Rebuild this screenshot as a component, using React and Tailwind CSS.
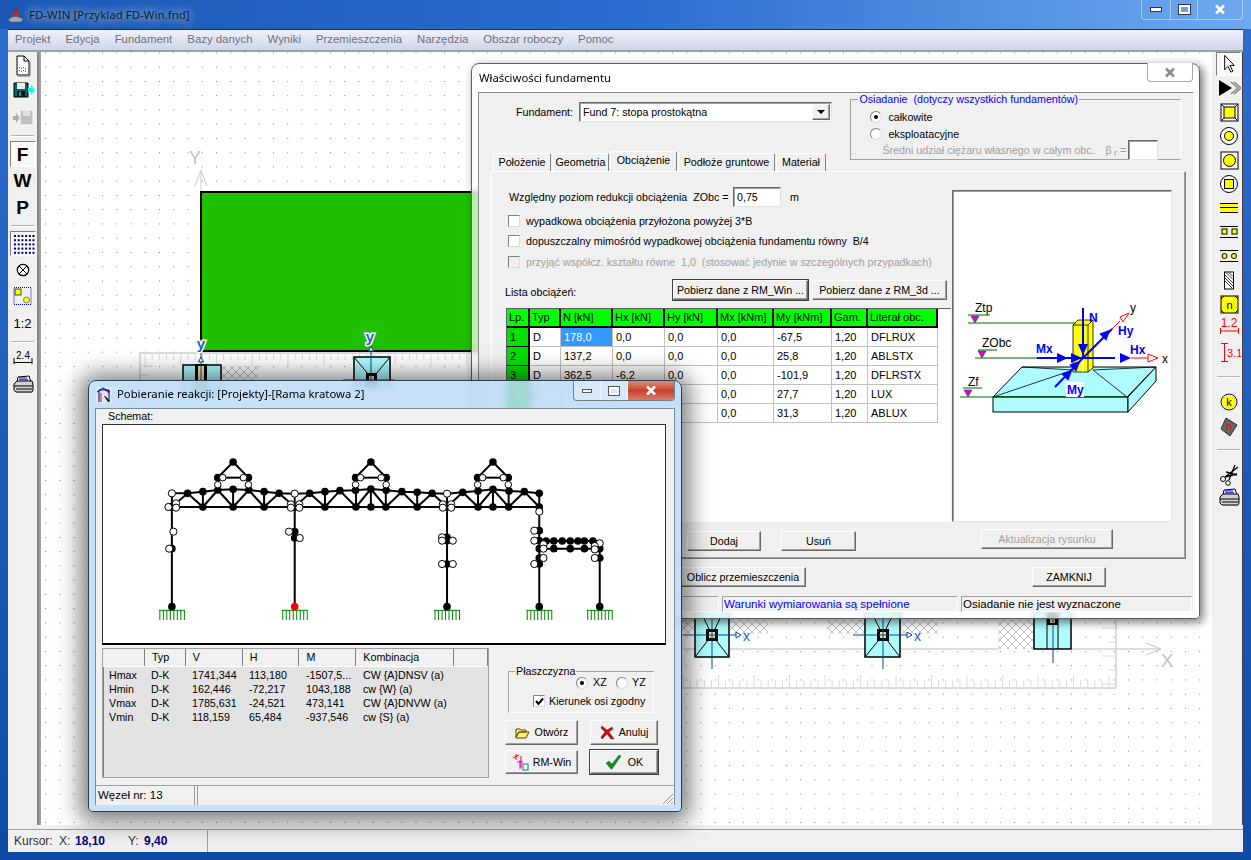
import React from 'react';

const raised = 'bg-[#f0f0f0] border border-t-white border-l-white border-r-[#696969] border-b-[#696969] shadow-[inset_-1px_-1px_0_#a0a0a0]';
const sunken = 'bg-white border border-t-[#696969] border-l-[#696969] border-r-[#e3e3e3] border-b-[#e3e3e3] shadow-[inset_1px_1px_0_#a0a0a0]';
const thinPanel = 'border border-t-[#a0a0a0] border-l-[#a0a0a0] border-r-white border-b-white';
const range = (n) => Array.from({ length: n }, (_, i) => i);

const Btn = ({ className = '', children, disabled, dark }) => (
  <button
    type="button"
    className={`${raised} ${dark ? 'outline outline-1 outline-[#404040]' : ''} ${disabled ? 'text-[#a0a0a0]' : 'text-black'} flex items-center justify-center whitespace-nowrap ${className}`}
  >
    {children}
  </button>
);

const Radio = ({ on }) => (
  <span className="w-[12px] h-[12px] rounded-full bg-white border border-t-[#808080] border-l-[#808080] border-r-[#dcdcdc] border-b-[#dcdcdc] flex items-center justify-center shrink-0">
    {on && <span className="w-[4px] h-[4px] rounded-full bg-black" />}
  </span>
);

const Check = ({ on, disabled }) => (
  <span className={`w-[12px] h-[12px] shrink-0 border border-t-[#808080] border-l-[#808080] border-r-[#dcdcdc] border-b-[#dcdcdc] flex items-center justify-center ${disabled ? 'bg-[#f0f0f0]' : 'bg-white'}`}>
    {on && (
      <svg width="9" height="9" viewBox="0 0 9 9">
        <path d="M1 4l2.5 3L8 1.5" fill="none" stroke="#000" strokeWidth="2" />
      </svg>
    )}
  </span>
);

/* ---------- toolbar icons ---------- */
const Ico = ({ children, w = 24, h = 24 }) => (
  <svg width={w} height={h} viewBox={`0 0 ${w} ${h}`}>{children}</svg>
);

const DocIcon = () => (
  <Ico>
    <path d="M6 3h7l5 5v14H6z" fill="#fff" stroke="#000" />
    <path d="M13 3v5h5" fill="none" stroke="#000" />
    <path d="M19 9v14H7" fill="none" stroke="#777" />
    <path d="M8 15q1-1 2 0t2 0 2 0 2 0M8 18q1-1 2 0t2 0 2 0 2 0" fill="none" stroke="#00f" strokeDasharray="1 1" />
  </Ico>
);
const SaveIcon = () => (
  <Ico>
    <path d="M3 4h14v14H3z" fill="#006a6a" stroke="#000" />
    <rect x="6" y="4" width="8" height="6" fill="#eee" />
    <rect x="6" y="12" width="8" height="6" fill="#111" />
    <rect x="8" y="13" width="2" height="4" fill="#0aa" />
    <path d="M17 9h3V6l4 5-4 5v-3h-3z" fill="#00ffff" />
  </Ico>
);
const DiskGrayIcon = () => (
  <Ico>
    <path d="M2 10h3V7l4 5-4 5v-3H2z" fill="#b0b0b0" />
    <rect x="9" y="4" width="13" height="15" fill="#c0c0c0" stroke="#fff" />
    <rect x="12" y="5" width="7" height="5" fill="#e0e0e0" />
  </Ico>
);
const GridIcon = () => (
  <Ico>
    {range(5).map((r) => range(6).map((c) => (
      <rect key={`${r}-${c}`} x={3 + c * 3.7} y={3 + r * 4.2} width="2" height="2" fill="#000080" />
    )))}
  </Ico>
);
const CrossCircle = () => (
  <Ico>
    <circle cx="12" cy="12" r="5.7" fill="#fff" stroke="#000" strokeWidth="1.2" />
    <path d="M8 8l8 8M16 8l-8 8" stroke="#000" />
  </Ico>
);
const SelectIcon = () => (
  <Ico>
    <rect x="3" y="2.500" width="17" height="17" fill="none" stroke="#00f" strokeDasharray="1 1" />
    <rect x="4" y="4" width="6" height="6" fill="#ff0" stroke="#000" strokeWidth=".7" />
    <circle cx="15.500" cy="15" r="3" fill="#ff0" stroke="#555" strokeWidth=".7" />
  </Ico>
);
const DimIcon = () => (
  <Ico>
    <text x="12" y="12" textAnchor="middle" fontSize="10" fontFamily="Liberation Sans" fill="#000">2.4</text>
    <path d="M3 11v6M21 11v6M3 15.500h18" stroke="#000" fill="none" />
  </Ico>
);
const PrinterIcon = () => (
  <Ico>
    <path d="M7 4l11-1 2 6H6z" fill="#fff" stroke="#000" />
    <path d="M8 5h8M8 6.800h9" stroke="#00f" />
    <path d="M3 11l3-3h15l1 3v6l-1 2H5l-2-2z" fill="#d0d0d0" stroke="#000" />
    <path d="M3 13h19M5 16h16" stroke="#000" />
    <path d="M6 19h15" stroke="#666" strokeWidth="2" />
  </Ico>
);
const CursorIcon = () => (
  <Ico>
    <path d="M8 3v15l3.500-3.500 3 6 2-1-3-6H18z" fill="#fff" stroke="#000" />
  </Ico>
);
const RunIcon = () => (
  <Ico>
    <path d="M2 4l13 8-13 8z" fill="#000" />
    <path d="M14 6l7 6-7 6M17 6l7 6-7 6" fill="none" stroke="#888" strokeWidth="1.500" />
  </Ico>
);
const Sq = ({ children }) => (
  <Ico>
    <rect x="4" y="4" width="17" height="17" fill="#fff" stroke="#000" />
    {children}
  </Ico>
);
const OuterSquare = () => (
  <Sq>
    <path d="M4 4l17 17M21 4L4 21" stroke="#000" />
    <rect x="7" y="7" width="11" height="11" fill="#ff0" stroke="#000" />
  </Sq>
);
const SquareRound = () => (
  <Sq>
    <circle cx="12.500" cy="12.500" r="6" fill="#ff0" stroke="#000" />
  </Sq>
);
const CircleRing = () => (
  <Ico>
    <circle cx="12" cy="12" r="8.500" fill="#fff" stroke="#000" />
    <circle cx="12" cy="12" r="4.500" fill="#ff0" stroke="#000" />
  </Ico>
);
const CircleSquare = () => (
  <Ico>
    <circle cx="12" cy="12" r="8.500" fill="#fff" stroke="#000" />
    <rect x="7.500" y="7.500" width="9" height="9" fill="#ff0" stroke="#000" />
  </Ico>
);
const BarsIcon = () => (
  <Ico>
    <path d="M3 7.500h18M3 11.500h18M3 16.500h18" stroke="#000" />
    <rect x="3" y="12" width="18" height="4" fill="#ff0" />
    <rect x="3" y="8" width="18" height="3" fill="#ff0" />
  </Ico>
);
const TwoSquares = () => (
  <Ico>
    <path d="M3 6.500h18M3 17.500h18" stroke="#000" />
    <rect x="5" y="9" width="5" height="5" fill="#ff0" stroke="#000" />
    <rect x="15" y="9" width="5" height="5" fill="#ff0" stroke="#000" />
  </Ico>
);
const TwoCircles = () => (
  <Ico>
    <path d="M3 6.500h18M3 17.500h18" stroke="#000" />
    <circle cx="7.500" cy="12" r="2.500" fill="#ff0" stroke="#000" />
    <circle cx="17" cy="12" r="2.500" fill="#ff0" stroke="#000" />
  </Ico>
);
const HatchIcon = () => (
  <Ico>
    <rect x="7.500" y="4" width="9" height="17" fill="#fff" stroke="#000" />
    <path d="M8 7l8 8M8 10l8 8M8 13l7 7M9 4.500l7 7M12 4.500l4 4" stroke="#000" strokeWidth=".8" />
  </Ico>
);
const NIcon = () => (
  <Ico>
    <rect x="4" y="4" width="17" height="17" fill="#ff0" stroke="#000" />
    <path d="M4 7l3-3M18 4l3 3M4 18l3 3M21 18l-3 3" stroke="#000" />
    <text x="12.500" y="16.500" textAnchor="middle" fontSize="11" fontFamily="Liberation Sans" fill="#000">n</text>
  </Ico>
);
const RedH = () => (
  <Ico>
    <text x="12" y="11" textAnchor="middle" fontSize="12" fontFamily="Liberation Sans" fill="#f00">1.2</text>
    <path d="M3.500 12v6M21.500 12v6M3.500 15h18" stroke="#f00" fill="none" />
  </Ico>
);
const RedV = () => (
  <Ico>
    <path d="M4 3.500h7M4 21.500h7M7.500 3.500v18" stroke="#f00" fill="none" />
    <text x="10" y="17" fontSize="11" fontFamily="Liberation Sans" fill="#f00">3.1</text>
  </Ico>
);
const KIcon = () => (
  <Ico>
    <circle cx="12" cy="12" r="8" fill="#ff0" stroke="#00f" />
    <text x="12" y="16" textAnchor="middle" fontSize="11" fontFamily="Liberation Sans" fill="#000">k</text>
  </Ico>
);
const DiamondIcon = () => (
  <Ico>
    <path d="M9 4l11 7-7 11-9-7z" fill="#666" stroke="#333" />
    <text x="12" y="16" textAnchor="middle" fontSize="11" fontFamily="Liberation Sans" fill="#e00">n</text>
  </Ico>
);
const ScissorsIcon = () => (
  <Ico>
    <path d="M8 15L21 5M9 10l11 3M8 15l12-3" stroke="#000" strokeWidth="1.300" fill="none" />
    <circle cx="6" cy="17" r="2.500" fill="#fff" stroke="#000" />
    <circle cx="11" cy="21" r="2.300" fill="#fff" stroke="#000" />
    <path d="M12 18L18 3" stroke="#000" strokeWidth="1.300" />
  </Ico>
);

const Sep = ({ h }) => (
  <div className={`w-full flex items-center justify-center ${h}`}>
    <div className="w-[23px] h-[2px] bg-[#b4b4b4] border-b border-white" />
  </div>
);

const LeftToolbar = () => {
  const cell = 'w-full flex items-center justify-center';
  const pressed = 'w-[26px] mx-auto flex items-center justify-center border border-t-[#808080] border-l-[#808080] border-r-white border-b-white bg-[#f8f8f8]';
  const letter = 'text-[19px] font-bold text-black leading-none';
  return (
    <div className="w-[29px] shrink-0 flex flex-col">
      <div className={`${cell} h-[25px]`}><DocIcon /></div>
      <div className={`${cell} h-[27px]`}><SaveIcon /></div>
      <div className={`${cell} h-[27px]`}><DiskGrayIcon /></div>
      <Sep h="h-[10px]" />
      <div className={`${pressed} h-[26px]`}><span className={letter}>F</span></div>
      <div className={`${cell} h-[27px]`}><span className={letter}>W</span></div>
      <div className={`${cell} h-[27px]`}><span className={letter}>P</span></div>
      <Sep h="h-[10px]" />
      <div className={`${pressed} h-[25px]`}><GridIcon /></div>
      <div className={`${cell} h-[27px]`}><CrossCircle /></div>
      <div className={`${cell} h-[27px]`}><SelectIcon /></div>
      <div className={`${cell} h-[27px] text-[13px] text-black`}>1:2</div>
      <Sep h="h-[10px]" />
      <div className={`${cell} h-[24px]`}><DimIcon /></div>
      <div className={`${cell} h-[27px]`}><PrinterIcon /></div>
    </div>
  );
};

const RightToolbar = () => {
  const cell = 'w-full h-6 flex items-center justify-center';
  return (
    <div className="w-[27px] shrink-0 flex flex-col">
      <div className="h-6 w-[25px] mx-auto flex items-center justify-center border border-t-[#808080] border-l-[#808080] border-r-white border-b-white bg-[#f8f8f8]"><CursorIcon /></div>
      <div className={cell}><RunIcon /></div>
      <div className={cell}><OuterSquare /></div>
      <div className={cell}><CircleRing /></div>
      <div className={cell}><SquareRound /></div>
      <div className={cell}><CircleSquare /></div>
      <div className={cell}><BarsIcon /></div>
      <div className={cell}><TwoSquares /></div>
      <div className={cell}><TwoCircles /></div>
      <div className={cell}><HatchIcon /></div>
      <div className={cell}><NIcon /></div>
      <div className={cell}><RedH /></div>
      <div className={cell}><RedV /></div>
      <Sep h="h-[26px]" />
      <div className={cell}><KIcon /></div>
      <div className={cell}><DiamondIcon /></div>
      <Sep h="h-[24px]" />
      <div className={cell}><ScissorsIcon /></div>
      <div className={cell}><PrinterIcon /></div>
    </div>
  );
};

/* ---------- plan drawing on the canvas ---------- */
const BLUE_AXIS = '#004a8f';
const Foundation = ({ x, w, top, bottom, cx, cy, axisTop, axisBottom, diag, postW = 12 }) => (
  <g>
    <rect x={x} y={top} width={w} height={bottom - top} fill="#aefcff" stroke="#000" strokeWidth="1.500" />
    {diag && <path d={`M${x} ${top}L${cx} ${cy}M${x + w} ${top}L${cx} ${cy}M${x} ${bottom}L${cx} ${cy}M${x + w} ${bottom}L${cx} ${cy}`} stroke="#000" />}
    <rect x={cx - postW / 2} y={cy - postW / 2} width={postW} height={postW} fill="#000" />
    <rect x={cx - 3} y={cy - 3} width="6" height="6" fill="#f5d9a0" />
    <path d={`M${cx} ${axisTop}V${axisBottom}`} stroke={BLUE_AXIS} />
  </g>
);
const AxisX = ({ x1, x2, y }) => (
  <g>
    <path d={`M${x1} ${y}H${x2}`} stroke={BLUE_AXIS} />
    <path d={`M${x2} ${y - 3}l5 3-5 3z`} fill="#fff" stroke={BLUE_AXIS} />
    <text x={x2 + 7} y={y + 6} fontSize="14" fill="#1e5fd0" fontFamily="Liberation Sans">x</text>
  </g>
);
const Label = ({ x, y, children }) => (
  <text x={x} y={y} fontSize="15" fontWeight="bold" fill="#1e5fd0" stroke="#fff" strokeWidth="3" paintOrder="stroke" textAnchor="middle" fontFamily="Liberation Sans">{children}</text>
);

const CanvasDrawing = () => (
  <svg className="absolute inset-0" width="1171" height="773" viewBox="41 52 1171 773">
    <defs>
      <pattern id="dots" patternUnits="userSpaceOnUse" x="45" y="66.700" width="14.250" height="14.250">
        <rect width="1" height="1" fill="#808080" />
      </pattern>
      <pattern id="hatch" patternUnits="userSpaceOnUse" width="8" height="8">
        <path d="M0 0l8 8M8 0L0 8" stroke="#c4c4c4" />
      </pattern>
    </defs>
    <rect x="41" y="52" width="1171" height="773" fill="#fff" />
    <rect x="41" y="52" width="1171" height="773" fill="url(#dots)" />
    <g stroke="#c8c8c8" fill="none">
      <path d="M201 192V171M195 186l6-16 6 16" />
    </g>
    <text x="195" y="164" textAnchor="middle" fontSize="18" fill="#c0c0c0" fontFamily="Liberation Sans">Y</text>
    <rect x="201" y="192" width="290" height="159" fill="#1fc000" stroke="#000" strokeWidth="2" />
    <rect x="202" y="193" width="288" height="157" fill="url(#dots)" opacity=".35" />

    {/* rulers */}
    <g stroke="#dcdcdc">
      <path d="M139 353H480M140 353V400" strokeWidth="2" fill="none" />
      {range(48).map((i) => <path key={i} d={`M${145 + i * 7.150} 354v${i % 5 === 0 ? 11 : 6}`} />)}
      <path d="M141 366h12M141 375h8" />
      <path d="M683 688H1116M1116 620V688" strokeWidth="2" fill="none" />
      {range(62).map((i) => <path key={i} d={`M${683 + i * 7.100} 688v${i % 5 === 0 ? -13 : -8}`} />)}
      {range(5).map((i) => <path key={i} d={`M1116 ${628 + i * 14}h${i % 2 ? -8 : -14}`} />)}
    </g>
    <path d="M683 649H998M1071 649H1160" stroke="#bbb" fill="none" />
    <path d="M1146 643l15 6-15 6" stroke="#c8c8c8" fill="none" />
    <text x="1167" y="667" textAnchor="middle" fontSize="19" fill="#c4c4c4" fontFamily="Liberation Sans">X</text>

    {/* upper row of footings */}
    <rect x="221" y="366" width="37" height="20" fill="url(#hatch)" />
    <rect x="183" y="365" width="38" height="30" fill="#aefcff" stroke="#000" strokeWidth="1.500" />
    <rect x="195" y="364" width="12" height="30" fill="#000" />
    <rect x="198" y="366" width="6" height="28" fill="#f5e3b0" />
    <path d="M201 352v42" stroke={BLUE_AXIS} />
    <path d="M198.500 362l2.500-5 2.500 5z" fill="#fff" stroke={BLUE_AXIS} />
    <Label x="201" y="349">y</Label>
    <rect x="354" y="357" width="36" height="30" fill="#aefcff" stroke="#000" strokeWidth="1.500" />
    <path d="M354 357l14 17M390 357l-14 17" stroke="#000" />
    <rect x="366" y="373" width="11" height="12" fill="#000" />
    <rect x="369" y="376" width="5" height="5" fill="#f5d9a0" />
    <path d="M371 347v35M343 380h52" stroke={BLUE_AXIS} />
    <path d="M368.500 351l2.500-5 2.500 5z" fill="#fff" stroke={BLUE_AXIS} />
    <Label x="370" y="342">y</Label>

    {/* lower row of footings */}
    <rect x="670" y="620" width="25" height="14" fill="url(#hatch)" />
    <rect x="729" y="620" width="39" height="14" fill="url(#hatch)" />
    <Foundation x={695} w={34} top={600} bottom={657} cx={712} cy={635} axisTop={600} axisBottom={669} diag />
    <AxisX x1={683} x2={736} y={635} />
    <rect x="827" y="620" width="38" height="14" fill="url(#hatch)" />
    <rect x="900" y="620" width="38" height="14" fill="url(#hatch)" />
    <Foundation x={865} w={35} top={600} bottom={657} cx={883} cy={635} axisTop={600} axisBottom={669} diag />
    <AxisX x1={853} x2={907} y={635} />
    <rect x="998" y="620" width="36" height="29" fill="url(#hatch)" />
    <rect x="1034" y="600" width="37" height="49" fill="#aefcff" stroke="#000" strokeWidth="1.500" />
    <path d="M1047 600v49M1058 600v49" stroke="#000" />
    <rect x="1047" y="612" width="11" height="13" fill="#000" />
    <rect x="1050" y="617" width="5" height="6" fill="#f5d9a0" />
    <path d="M1053 612v51" stroke={BLUE_AXIS} />
  </svg>
);

/* ---------- truss scheme ---------- */
const tx = (X) => 85 + X / 2.613;
const ty = (Y) => 375 + Y / 3;
const polyPts = (pts) => pts.map(([x, y]) => `${tx(x)},${ty(y)}`).join(' ');
const topChord = [[227, 352], [268, 352], [308, 347], [347, 342], [387, 340], [428, 342], [468, 347], [507, 352], [548, 353], [587, 352], [627, 347], [666, 344], [707, 343], [747, 339], [787, 343], [828, 347], [868, 349], [907, 352], [946, 353], [987, 349], [1027, 345], [1066, 340], [1108, 345], [1148, 347], [1187, 352]];
const bottomX = [227, 308, 387, 468, 548, 627, 708, 747, 786, 868, 946, 1027, 1066, 1107, 1187];
const web = [[227, 268], [308, 268], [308, 347], [387, 347], [387, 428], [468, 428], [468, 507], [548, 507], [548, 587], [627, 587], [627, 666], [708, 666], [708, 747], [786, 747], [786, 828], [868, 828], [868, 907], [946, 907], [946, 987], [1027, 987], [1027, 1066], [1107, 1066], [1107, 1148], [1187, 1148]];
const yAt = (X) => topChord.find(([x]) => Math.abs(x - X) < 3)?.[1] ?? 345;
const hutCx = [387, 747, 1066];
const blackNodes = [[222, 393], [227, 518], [548, 467], [548, 486], [946, 484], [946, 494], [946, 564], [1187, 464], [1187, 494], [1187, 518], [1187, 546], [1187, 564], [1345, 518], [1345, 546], [1205, 495], [1225, 495], [1247, 495], [1268, 495], [1288, 495], [1305, 495], [1327, 495], [1225, 518], [1268, 518], [1305, 518], [227, 692], [946, 692], [1187, 692], [1345, 692]];
const whiteNodes = [[227, 352], [238, 382], [238, 395], [218, 393], [231, 467], [220, 518], [548, 353], [538, 385], [560, 385], [538, 395], [560, 395], [533, 467], [561, 486], [946, 353], [935, 385], [957, 385], [935, 395], [957, 395], [933, 484], [933, 494], [961, 494], [933, 564], [961, 564], [1187, 407], [1174, 464], [1174, 494], [1198, 505], [1198, 518], [1198, 546], [1174, 564], [1345, 502], [1332, 510], [1332, 520], [1332, 546]];
const supports = [227, 548, 946, 1187, 1345];

const TrussScheme = () => (
  <svg width="561" height="218" viewBox="103 424 561 218">
    <g stroke="#000" strokeWidth="2" fill="none">
      <polyline points={polyPts(topChord)} />
      <polyline points={polyPts([[227, 393], [1187, 393]])} />
      {web.map(([b, t], i) => <polyline key={i} points={polyPts([[b, 393], [t, yAt(t)]])} />)}
      {[308, 387, 468, 627, 708, 747, 786, 868, 1027, 1066, 1107].map((X) => <polyline key={X} points={polyPts([[X, 393], [X, yAt(X)]])} />)}
      {hutCx.map((c) => (
        <g key={c}>
          <polyline points={polyPts([[c - 40, 342], [c - 40, 305], [c, 258], [c + 40, 305], [c + 40, 342]])} />
          <polyline points={polyPts([[c - 40, 305], [c + 40, 305]])} />
        </g>
      ))}
      {[[227, 352], [548, 353], [946, 353], [1187, 352], [1345, 505]].map(([X, Y]) => <polyline key={X} points={polyPts([[X, Y], [X, 692]])} />)}
      <polyline points={polyPts([[1187, 495], [1345, 495]])} />
      <polyline points={polyPts([[1187, 518], [1345, 518]])} />
    </g>
    {supports.map((X) => (
      <g key={X} stroke="#008000">
        <path d={`M${tx(X) - 13} ${ty(703)}H${tx(X) + 13}`} />
        {range(8).map((i) => <path key={i} d={`M${tx(X) - 12 + i * 3.500} ${ty(703)}V${ty(732)}`} />)}
      </g>
    ))}
    {bottomX.map((X) => <circle key={X} cx={tx(X)} cy={ty(393)} r="3.800" fill="#000" />)}
    {topChord.filter(([x]) => ![227, 548, 946].includes(x)).map(([X, Y]) => <circle key={X} cx={tx(X)} cy={ty(Y)} r="3.800" fill="#000" />)}
    {hutCx.map((c) => [[c, 258], [c - 40, 305], [c + 40, 305]].map(([X, Y]) => <circle key={`${X}-${Y}`} cx={tx(X)} cy={ty(Y)} r="3.800" fill="#000" />))}
    {blackNodes.map(([X, Y]) => <circle key={`${X}-${Y}`} cx={tx(X)} cy={ty(Y)} r="3.800" fill="#000" />)}
    <circle cx={tx(548)} cy={ty(692)} r="3.800" fill="#f00" />
    {hutCx.map((c) => [[c - 27, 305], [c + 27, 305], [c - 40, 326], [c + 40, 326]].map(([X, Y]) => <circle key={`${X}-${Y}`} cx={tx(X)} cy={ty(Y)} r="3.300" fill="#fff" stroke="#000" />))}
    {whiteNodes.map(([X, Y]) => <circle key={`${X}-${Y}`} cx={tx(X)} cy={ty(Y)} r="3.600" fill="#fff" stroke="#000" />)}
  </svg>
);

/* ---------- footing sketch with loads ---------- */
const Arrow = ({ x, y, a }) => (
  <path d="M-6 -5L5 0L-6 5z" fill="#00f" transform={`translate(${x} ${y}) rotate(${a})`} />
);
const Tri = ({ x, y }) => <path d={`M${x - 4} ${y - 3}h8l-4 7z`} fill="#e000e0" stroke="#006400" strokeWidth=".6" />;
const SketchText = ({ x, y, c = '#000', b, children }) => (
  <text x={x} y={y} fontSize="12" fontWeight={b ? 'bold' : 'normal'} fill={c} fontFamily="Liberation Sans">{children}</text>
);

const FootingSketch = () => (
  <svg width="218" height="330" viewBox="953 191 218 330">
    <path d="M1022 367h134l-29 30H993z" fill="#aefcff" stroke="#000" />
    <rect x="993" y="397" width="135" height="15" fill="#aefcff" stroke="#000" />
    <path d="M1128 397l28-30v14l-28 31z" fill="#aefcff" stroke="#000" />
    <path d="M993 397l80-27M1127 397l-34-27M1022 367l51 3M1156 367l-63 3" stroke="#000" fill="none" strokeWidth=".8" />
    <path d="M1073 325l5-5h15v48l-5 4h-15z" fill="#ffff00" stroke="#000" strokeWidth=".8" />
    <path d="M1073 325h15v47M1088 325l5-5" fill="none" stroke="#000" strokeWidth=".8" />
    <path d="M1083 372V325" stroke="#fff" />

    <g stroke="#006400" fill="none">
      <path d="M968 323h108M968 315h22M975 358h62M978 350h19M960 397h168M963 388h19" />
    </g>
    <Tri x={975} y={319} />
    <Tri x={982} y={354} />
    <Tri x={968} y={393} />
    <SketchText x={975} y={312}>Ztp</SketchText>
    <SketchText x={982} y={347}>ZObc</SketchText>
    <SketchText x={968} y={386}>Zf</SketchText>

    <g stroke="#00f" strokeWidth="2" fill="none">
      <path d="M1083 308v50M1037 358h78M1055 387l28-29 29-29" />
    </g>
    <Arrow x={1083} y={350} a={90} />
    <Arrow x={1063} y={358} a={0} />
    <Arrow x={1077} y={358} a={0} />
    <Arrow x={1126} y={358} a={0} />
    <Arrow x={1069} y={373} a={-45} />
    <Arrow x={1077} y={364} a={-45} />
    <Arrow x={1107} y={333} a={-45} />
    <path d="M1131 358h20M1112 329l8-8" stroke="#f00" fill="none" />
    <path d="M1148 354l10 4-10 4z" fill="#fff" stroke="#f00" />
    <path d="M1129 313l-9 4 3 5z" fill="#fff" stroke="#f00" />
    <SketchText x={1162} y={363} c="#000">x</SketchText>
    <SketchText x={1130} y={312} c="#000">y</SketchText>
    <SketchText x={1089} y={322} c="#00f" b>N</SketchText>
    <SketchText x={1118} y={335} c="#00f" b>Hy</SketchText>
    <SketchText x={1130} y={354} c="#00f" b>Hx</SketchText>
    <SketchText x={1036} y={353} c="#00f" b>Mx</SketchText>
    <rect x="1066" y="382" width="18" height="15" fill="#fff" />
    <SketchText x={1067} y={394} c="#00f" b>My</SketchText>
  </svg>
);

/* ---------- load table ---------- */
const colW = ['w-[23px]', 'w-[31px]', 'w-[52px]', 'w-[52px]', 'w-[53px]', 'w-[56px]', 'w-[58px]', 'w-[36px]', 'w-[70px]'];
const loadHeader = ['Lp.', 'Typ', 'N [kN]', 'Hx [kN]', 'Hy [kN]', 'Mx [kNm]', 'My [kNm]', 'Gam.', 'Literał obc.'];
const loadRows = [
  ['1', 'D', '178,0', '0,0', '0,0', '0,0', '-67,5', '1,20', 'DFLRUX'],
  ['2', 'D', '137,2', '0,0', '0,0', '0,0', '25,8', '1,20', 'ABLSTX'],
  ['3', 'D', '362,5', '-6,2', '0,0', '0,0', '-101,9', '1,20', 'DFLRSTX'],
  ['4', 'D', '', '', '', '0,0', '27,7', '1,20', 'LUX'],
  ['5', 'D', '', '', '', '0,0', '31,3', '1,20', 'ABLUX'],
];

const LoadTable = () => (
  <div className="w-[445px] h-[214px] ml-[14px] mt-[8px] bg-white border-l border-t border-[#606060] text-[11px]">
    <div className="flex h-[19px]">
      {loadHeader.map((t, i) => (
        <div key={t} className={`${colW[i]} h-full bg-[#00ff00] border-r-2 border-b-2 border-black px-[2px] flex items-center whitespace-nowrap`}>{t}</div>
      ))}
    </div>
    {loadRows.map((row) => (
      <div key={row[0]} className="flex h-[19px]">
        {row.map((t, i) => (
          <div
            key={i}
            className={`${colW[i]} h-full px-[3px] flex items-center border-b ${i === 0 ? 'bg-[#00e000] border-r-2 border-b-black border-r-black' : 'border-r border-[#c0c0c0]'} ${row[0] === '1' && i === 2 ? 'bg-[#3399ff] text-white' : ''}`}
          >
            {t}
          </div>
        ))}
      </div>
    ))}
  </div>
);

/* ---------- properties dialog ---------- */
const tabs = [
  ['Położenie', 'w-[58px]'],
  ['Geometria', 'w-[57px]'],
  ['Obciążenie', 'w-[67px]'],
  ['Podłoże gruntowe', 'w-[97px]'],
  ['Materiał', 'w-[50px]'],
];

const PropertiesDialog = () => (
  <div className="absolute left-[471px] top-[63px] w-[729px] h-[556px] rounded-t-[8px] rounded-b-[4px] bg-white/70 backdrop-blur-[3px] border border-[#606060] shadow-[3px_3px_10px_rgba(0,0,0,.55)] px-[6px] text-[10.7px] text-black">
    <div className="h-[28px] flex items-center relative">
      <span className="ml-[1px] text-[11.3px] font-['Noto_Sans',sans-serif]">Właściwości fundamentu</span>
      <div className="absolute right-0 -top-px w-[46px] h-[19px] bg-white border border-t-0 border-[#a8a8a8] rounded-b-[4px] flex items-center justify-center">
        <svg width="12" height="11" viewBox="0 0 12 11">
          <path d="M2 1.500l8 8M10 1.500l-8 8" stroke="#8a8a8a" strokeWidth="2.500" />
        </svg>
      </div>
    </div>

    <div className="w-[715px] h-[520px] bg-[#f0f0f0] border-l border-t border-[#8a8a8a] flex flex-col">
      <div className="h-[78px] flex px-[12px]">
        <div className="w-[361px] flex flex-col">
          <div className="flex items-center mt-[9px] h-[20px]">
            <span className="ml-[25px] w-[63px]">Fundament:</span>
            <div className={`${sunken} w-[253px] h-[20px] flex items-center justify-between pl-[3px]`}>
              <span>Fund 7: stopa prostokątna</span>
              <span className={`${raised} w-[18px] h-[16px] flex items-center justify-center mr-[1px]`}>
                <span className="w-0 h-0 border-x-[4px] border-x-transparent border-t-[4px] border-t-black" />
              </span>
            </div>
          </div>
          <div className="flex items-end mt-[29px] ml-[2px] h-[20px]">
            {tabs.map(([t, w]) => (
              <div
                key={t}
                className={`${w} mr-[1px] border border-b-0 border-t-white border-l-white border-r-[#808080] rounded-t-[2px] flex items-center justify-center bg-[#f0f0f0] whitespace-nowrap ${t === 'Obciążenie' ? 'h-[20px] pb-[3px]' : 'h-[18px]'}`}
              >
                {t}
              </div>
            ))}
          </div>
        </div>
        <fieldset className="-mt-[2px] w-[332px] h-[69px] border border-t-[#a0a0a0] border-l-[#a0a0a0] border-r-white border-b-[#a0a0a0] pl-[19px]">
          <legend className="ml-[-12px] px-[1px] text-[#0000ff]">Osiadanie&nbsp; (dotyczy wszystkich fundamentów)</legend>
          <div className="flex items-center h-[17px] gap-[6px] mt-[1px]"><Radio on />całkowite</div>
          <div className="flex items-center h-[17px] gap-[6px]"><Radio />eksploatacyjne</div>
          <div className="flex items-center h-[15px] pl-[12px] text-[#a0a0a0] whitespace-nowrap">
            <span className="w-[223px]">Średni udział ciężaru własnego w całym obc.</span>
            <span className="w-[23px]">β<sub className="text-[9px]"> r</sub> =</span>
            <span className={`${sunken} w-[30px] h-[20px] bg-[#f0f0f0]`} />
          </div>
        </fieldset>
      </div>

      <div className="mx-[12px] w-[695px] h-[388px] border border-t-white border-l-white border-r-[#808080] border-b-[#808080] shadow-[inset_-1px_-1px_0_#a0a0a0] flex flex-col">
        <div className="h-[351px] flex">
          <div className="w-[460px] shrink-0">
            <div className="flex items-center mt-[15px] h-[20px] pl-[17px] whitespace-nowrap">
              <span className="w-[224px]">Względny poziom redukcji obciążenia&nbsp; ZObc =</span>
              <span className={`${sunken} w-[48px] h-[20px] pl-[3px] flex items-center`}>0,75</span>
              <span className="ml-[9px]">m</span>
            </div>
            <div className="flex items-center gap-[6px] mt-[4px] h-[20px] pl-[16px] whitespace-nowrap"><Check />wypadkowa obciążenia przyłożona powyżej 3*B</div>
            <div className="flex items-center gap-[6px] h-[20px] pl-[16px] whitespace-nowrap"><Check />dopuszczalny mimośród wypadkowej obciążenia fundamentu równy&nbsp; B/4</div>
            <div className="flex items-center gap-[6px] mt-[1px] h-[20px] pl-[16px] text-[#a0a0a0] whitespace-nowrap"><Check disabled />przyjąć współcz. kształtu równe&nbsp; 1,0&nbsp; (stosować jedynie w szczególnych przypadkach)</div>
            <div className="flex items-center mt-[8px] h-[20px]">
              <span className="ml-[13px] w-[168px] pt-[5px]">Lista obciążeń:</span>
              <Btn dark className="w-[135px] h-[20px]">Pobierz dane z RM_Win ...</Btn>
              <Btn className="ml-[4px] w-[135px] h-[20px]">Pobierz dane z RM_3d ...</Btn>
            </div>
            <LoadTable />
          </div>
          <div className={`${sunken} mt-[18px] w-[220px] h-[332px] overflow-hidden`}>
            <FootingSketch />
          </div>
        </div>
        <div className="flex">
          <Btn className="ml-[195px] mt-[8px] w-[74px] h-[20px]">Dodaj</Btn>
          <Btn className="ml-[20px] mt-[8px] w-[75px] h-[20px]">Usuń</Btn>
          <Btn disabled className="ml-[125px] mt-[6px] w-[132px] h-[20px]">Aktualizacja rysunku</Btn>
        </div>
      </div>

      <div className="flex mt-[8px] pl-[201px]">
        <Btn className="w-[126px] h-[20px]">Oblicz przemieszczenia</Btn>
        <Btn className="ml-[226px] w-[74px] h-[20px]">ZAMKNIJ</Btn>
      </div>

      <div className="flex mt-[9px] h-[16px] gap-[3px] text-[11.5px] whitespace-nowrap">
        <div className={`${thinPanel} w-[240px]`} />
        <div className={`${thinPanel} w-[236px] text-[#0000ff] pl-[1px] leading-[15px]`}>Warunki wymiarowania są spełnione</div>
        <div className={`${thinPanel} w-[231px] pl-[1px] leading-[15px]`}>Osiadanie nie jest wyznaczone</div>
      </div>
    </div>
  </div>
);

/* ---------- reactions dialog ---------- */
const reactionCols = ['w-[42px]', 'w-[41px]', 'w-[57px]', 'w-[57px]', 'w-[57px]', 'w-[98px]', 'w-[34px]'];
const reactionHeader = ['', 'Typ', 'V', 'H', 'M', 'Kombinacja', ''];
const reactionRows = [
  ['Hmax', 'D-K', '1741,344', '113,180', '-1507,5...', 'CW {A}DNSV (a)'],
  ['Hmin', 'D-K', '162,446', '-72,217', '1043,188', 'cw {W} (a)'],
  ['Vmax', 'D-K', '1785,631', '-24,521', '473,141', 'CW {A}DNVW (a)'],
  ['Vmin', 'D-K', '118,159', '65,484', '-937,546', 'cw {S} (a)'],
];

const ReactionsDialog = () => (
  <div className="absolute left-[88px] top-[380px] w-[594px] h-[432px] rounded-t-[8px] rounded-b-[4px] bg-[#bcdcf6]/85 backdrop-blur-[3px] border border-[#2c3e50] shadow-[0_2px_22px_8px_rgba(0,0,0,.5)] px-[6px] text-[10.7px] text-black">
    <div className="h-[27px] flex items-center gap-[5px] relative">
      <svg width="16" height="16" viewBox="0 0 16 16" className="ml-[1px]">
        <rect x="0" y="0" width="16" height="16" fill="#fff" fillOpacity=".3" />
        <path d="M3 15V3h10v12M1 5l6-4 7 4" fill="none" stroke="#000080" />
        <path d="M5 6v9M9 3l4 3" stroke="#f00" fill="none" />
        <path d="M9 9l5 5-2 1-4-6z" fill="#000" />
      </svg>
      <span className="text-[11.3px] font-['Noto_Sans',sans-serif]">Pobieranie reakcji: [Projekty]-[Rama kratowa 2]</span>
      <div className="absolute right-0 top-0 w-[102px] h-[20px] flex border border-t-0 border-[#4a5a6a]/70 rounded-b-[4px] overflow-hidden">
        <div className="w-[27px] bg-white/25 border-r border-white/60 flex items-center justify-center"><span className="w-[10px] h-[4px] bg-white border border-[#555]" /></div>
        <div className="w-[27px] bg-white/25 border-r border-white/60 flex items-center justify-center"><span className="w-[10px] h-[8px] border-2 border-white outline outline-1 outline-[#555]" /></div>
        <div className="flex-1 bg-gradient-to-b from-[#e08a7a] via-[#c8402c] to-[#d8796a] flex items-center justify-center">
          <svg width="12" height="11" viewBox="0 0 12 11"><path d="M2 1.500l8 8M10 1.500l-8 8" stroke="#fff" strokeWidth="2.500" /></svg>
        </div>
      </div>
    </div>

    <div className="w-[580px] h-[397px] bg-[#f0f0f0] border border-[#7a8a9a] border-b-0 flex flex-col">
      <div className="h-[15px] pl-[12px] leading-[15px]">Schemat:</div>
      <div className="ml-[6px] w-[564px] h-[221px] bg-white border border-[#303030] border-b-2 border-b-black overflow-hidden shrink-0">
        <TrussScheme />
      </div>
      <div className="flex mt-[3px] h-[130px] pl-[6px]">
        <div className="w-[387px] h-[130px] bg-[#e3e3e3] border border-[#a0a0a0] shadow-[inset_1px_1px_0_#808080]">
          <div className="flex h-[18px] bg-[#f0f0f0] border-b border-white">
            {reactionHeader.map((t, i) => (
              <div key={i} className={`${reactionCols[i]} h-full border-r border-[#808080] flex items-center pl-[7px]`}>{t}</div>
            ))}
          </div>
          <div className="pt-[1px]">
            {reactionRows.map((row) => (
              <div key={row[0]} className="flex h-[14px] leading-[14px]">
                {row.map((t, i) => (
                  <div key={i} className={`${reactionCols[i]} pl-[6px] whitespace-nowrap`}>{t}</div>
                ))}
              </div>
            ))}
          </div>
        </div>
        <div className="ml-[16px] flex flex-col">
          <fieldset className="ml-[3px] mt-[18px] w-[146px] h-[47px] border border-t-[#a0a0a0] border-l-[#a0a0a0] border-r-white border-b-white">
            <legend className="ml-[6px] px-[1px] leading-[10px]">Płaszczyzna</legend>
            <div className="flex items-center h-[15px] ml-[67px] mt-[-1px]"><Radio on /><span className="ml-[5px] w-[23px]">XZ</span><Radio /><span className="ml-[4px]">YZ</span></div>
            <div className="flex items-center h-[20px] ml-[24px] mt-[1px] whitespace-nowrap"><Check on /><span className="ml-[4px]">Kierunek osi zgodny</span></div>
          </fieldset>
          <div className="flex mt-[7px]">
            <Btn className="w-[73px] h-[25px] gap-[5px]">
              <svg width="15" height="12" viewBox="0 0 15 12"><path d="M1 2h4l1 1h5v2H4L1 10zM1 10l3-5h10l-3 6H1z" fill="#ffef70" stroke="#5a4a00" /></svg>
              Otwórz
            </Btn>
            <Btn className="ml-[12px] w-[68px] h-[25px] gap-[4px]">
              <svg width="15" height="15" viewBox="0 0 15 15"><path d="M2 1l5 4 5-3 1 2-4 3 5 7h-3L7 9l-5 5-1-2 4-5-4-4z" fill="#c01010" stroke="#600" strokeWidth=".4" /></svg>
              Anuluj
            </Btn>
          </div>
          <div className="flex mt-[5px]">
            <Btn className="w-[73px] h-[24px] gap-[3px]">
              <svg width="18" height="18" viewBox="0 0 18 18">
                <path d="M1 5l6-3M4 1v6M9 3v12" stroke="#f00" fill="none" />
                <path d="M8 7v9M5 9h6" stroke="#e000e0" fill="none" />
                <rect x="11" y="11" width="5" height="6" fill="#fff" stroke="#008080" />
              </svg>
              RM-Win
            </Btn>
            <Btn dark className="ml-[12px] w-[68px] h-[24px] gap-[6px]">
              <svg width="17" height="16" viewBox="0 0 17 16"><path d="M1 9l3-2 3 3 7-9 2 1-9 13h-1z" fill="#1a8a1a" stroke="#064" strokeWidth=".4" /></svg>
              OK
            </Btn>
          </div>
        </div>
      </div>
      <div className="flex flex-1 mt-[7px] border-t border-[#a0a0a0] text-[11.5px]">
        <div className="w-[99px] pl-[2px] pt-[1px] border-r border-[#a0a0a0]">Węzeł nr: 13</div>
        <div className="ml-[2px] flex-1 border-l border-[#a0a0a0] flex items-end justify-end">
          <svg width="13" height="13" viewBox="0 0 13 13"><path d="M12 2L2 12M12 6l-6 6M12 10l-2 2" stroke="#9a9a9a" fill="none" /></svg>
        </div>
      </div>
    </div>
  </div>
);

const menu = ['Projekt', 'Edycja', 'Fundament', 'Bazy danych', 'Wyniki', 'Przemieszczenia', 'Narzędzia', 'Obszar roboczy', 'Pomoc'];

export default function App() {
  return (
    <div className="relative w-[1251px] h-[860px] overflow-hidden bg-gradient-to-b from-[#2f6fd0] to-[#0f4aa6] font-['Liberation_Sans',sans-serif] text-[12px]">
      <div className="h-[29px] bg-gradient-to-r from-[#1a58b4] via-[#2a6cd0] to-[#6ea8ef] flex items-center relative">
        <svg width="18" height="18" viewBox="0 0 18 18" className="ml-[7px]">
          <path d="M1 14l4-3 4-1 7 3-2 3H4z" fill="#a8a8a8" stroke="#555" strokeWidth=".5" />
          <path d="M8 2h2l.5 8H7.500z" fill="#b02020" />
          <path d="M4 8l5-1 4 1-4 3z" fill="#c03030" />
        </svg>
        <span className="ml-[4px] text-[11.5px] font-['Noto_Sans',sans-serif] text-[#10202a] [text-shadow:0_0_8px_#ffffffc0,0_0_14px_#ffffffa0]">FD-WIN [Przyklad FD-Win.fnd]</span>
        <div className="absolute right-[8px] top-0 w-[102px] h-[20px] flex border border-t-0 border-[#b8d4f8]/80 rounded-b-[4px] overflow-hidden">
          <div className="w-[29px] border-r border-[#b8d4f8]/80 flex items-center justify-center"><span className="w-[12px] h-[5px] bg-white border border-[#334]" /></div>
          <div className="w-[27px] border-r border-[#b8d4f8]/80 flex items-center justify-center"><span className="w-[11px] h-[9px] border-2 border-white outline outline-1 outline-[#334]" /></div>
          <div className="flex-1 flex items-center justify-center">
            <svg width="12" height="11" viewBox="0 0 12 11"><path d="M2 1.500l8 8M10 1.500l-8 8" stroke="#fff" strokeWidth="2.500" /></svg>
          </div>
        </div>
      </div>

      <div className="mx-[8px] h-[823px] bg-[#f0f0f0] border-t border-[#12346e] flex flex-col">
        <div className="h-[22px] shrink-0 bg-gradient-to-b from-[#f0f2fa] to-[#cfd5ea] border-b-2 border-[#a0a0a0] flex items-center gap-[15px] pl-[7px] text-[11.4px] text-[#707078]">
          {menu.map((m) => <span key={m}>{m}</span>)}
        </div>
        <div className="flex h-[773px] shrink-0">
          <LeftToolbar />
          <div className="w-[4px] shrink-0 bg-gradient-to-r from-[#808080] to-[#a8a8a8]" />
          <div className="relative w-[1171px] shrink-0 bg-white overflow-hidden">
            <CanvasDrawing />
          </div>
          <div className="w-[3px] shrink-0 bg-[#f0f0f0]" />
          <RightToolbar />
          <div className="w-[1px] shrink-0 bg-[#404040]" />
        </div>
        <div className="flex-1 mt-[4px] border-t border-[#a0a0a0] flex items-center">
          <div className="w-[200px] h-full flex items-center text-[#303030] border-r border-[#a0a0a0]">
            <span className="ml-[6px] w-[45px]">Kursor:</span>
            <span className="w-[16px]">X:</span>
            <span className="w-[53px] font-bold text-[#000080]">18,10</span>
            <span className="w-[16px]">Y:</span>
            <span className="font-bold text-[#000080]">9,40</span>
          </div>
        </div>
      </div>

      <PropertiesDialog />
      <ReactionsDialog />
    </div>
  );
}
